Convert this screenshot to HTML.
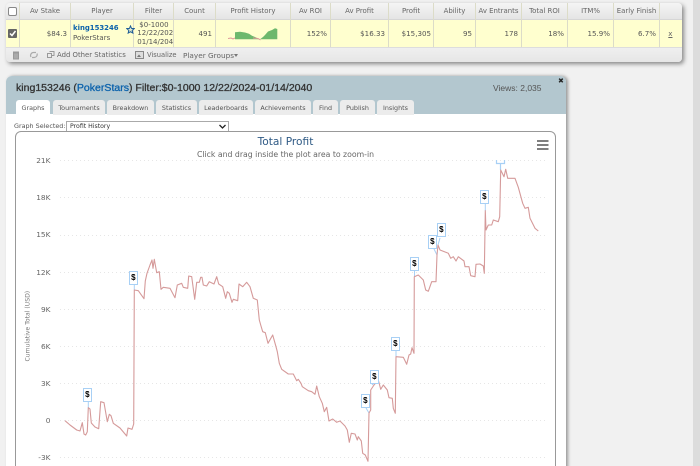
<!DOCTYPE html>
<html><head><meta charset="utf-8"><style>
html,body{margin:0;padding:0;width:700px;height:466px;overflow:hidden;background:#f1f1f1;}
body{position:relative;font-family:"DejaVu Sans",sans-serif;font-size:7px;color:#555;}
#w{position:absolute;left:0;top:0;width:700px;height:466px;overflow:hidden;background:#f1f1f1;filter:blur(.35px);}
.a{position:absolute;white-space:nowrap;}
#scroll{left:693px;top:0;width:7px;height:466px;background:#dcdcdc;}
#grid{left:6px;top:3px;width:676px;height:59px;border-radius:4px;background:#ececec;box-shadow:2px 2px 4px #888;overflow:hidden;}
#h{left:0;top:0;width:676px;height:16px;background:linear-gradient(#f4f4f4,#e4e4e4);border-bottom:1px solid #d6d6d6;}
#r{left:0;top:17px;width:676px;height:27px;background:#ffffcf;border-bottom:1px solid #ddd;}
#t{left:0;top:45px;width:676px;height:14px;background:linear-gradient(#efefef,#e6e6e6);}
.v{top:0;width:1px;height:44px;background:#dcdcc8;}
.hc,.rc{position:absolute;text-align:center;line-height:17px;top:0;color:#666;font-size:6.95px;}
.rc{top:17px;line-height:27px;text-align:right;color:#555;font-size:7.1px;}
#panel{left:6px;top:76px;width:560px;height:400px;background:#fff;border-radius:6px 6px 0 0;box-shadow:2px 0 3px #999;}
#ph{left:0;top:0;width:560px;height:38px;background:#b3c7cf;border-radius:6px 6px 0 0;}
.tab{position:absolute;top:100px;height:15px;line-height:16px;text-align:center;background:#ececec;border-radius:3px 3px 0 0;font-size:6.4px;color:#555;}
#box{left:15px;top:131px;width:539px;height:345px;border:1px solid #999;border-radius:6px;background:#fff;}
.yl{position:absolute;width:37.5px;left:13px;text-align:right;font-size:7.4px;color:#666;line-height:9px;}
.m{position:absolute;width:6.6px;height:11.6px;border:1.2px solid #a8d0f5;background:#fff;color:#000;font:bold 8px/12px "Liberation Sans",sans-serif;text-align:center;}
</style></head><body><div id="w">
<div class="a" id="scroll"></div>
<div class="a" id="grid">
 <div class="a" id="h"></div>
 <div class="a" id="r"></div>
 <div class="a" id="t"></div>
 <div class="a v" style="left:13px"></div><div class="a v" style="left:64px"></div><div class="a v" style="left:127px"></div><div class="a v" style="left:167px"></div><div class="a v" style="left:209px"></div><div class="a v" style="left:284px"></div><div class="a v" style="left:324px"></div><div class="a v" style="left:382px"></div><div class="a v" style="left:427px"></div><div class="a v" style="left:469px"></div><div class="a v" style="left:515px"></div><div class="a v" style="left:561px"></div><div class="a v" style="left:607px"></div><div class="a v" style="left:653px"></div>
 <div class="hc" style="left:14px;width:50px">Av Stake</div>
 <div class="hc" style="left:65px;width:62px">Player</div>
 <div class="hc" style="left:128px;width:39px">Filter</div>
 <div class="hc" style="left:168px;width:41px">Count</div>
 <div class="hc" style="left:210px;width:74px">Profit History</div>
 <div class="hc" style="left:285px;width:39px">Av ROI</div>
 <div class="hc" style="left:325px;width:57px">Av Profit</div>
 <div class="hc" style="left:383px;width:44px">Profit</div>
 <div class="hc" style="left:428px;width:41px">Ability</div>
 <div class="hc" style="left:470px;width:45px">Av Entrants</div>
 <div class="hc" style="left:516px;width:45px">Total ROI</div>
 <div class="hc" style="left:562px;width:45px">ITM%</div>
 <div class="hc" style="left:608px;width:45px">Early Finish</div>
 <div class="a" style="left:2px;top:4px;width:7px;height:7px;background:#fff;border:1px solid #888;border-radius:2px"></div>
 <div class="a" style="left:2px;top:26px;width:9px;height:9px;background:#666;border-radius:1px"></div>
 <svg class="a" style="left:2px;top:26px" width="9" height="9"><path d="M2 4.5L4 6.5L7.5 2" stroke="#fff" stroke-width="1.5" fill="none"/></svg>
 <div class="rc" style="left:14px;width:47px">$84.3</div>
 <div class="a" style="left:67px;top:20.5px;font-weight:bold;color:#0b62ac;font-size:6.9px;line-height:9px">king153246</div>
 <div class="a" style="left:67px;top:31px;color:#555;line-height:9px;font-size:7px">PokerStars</div>
 <svg class="a" style="left:120px;top:22px" width="9" height="9" viewBox="0 0 10 10"><path d="M5 1L6.2 3.8L9.2 4L6.9 6L7.6 9L5 7.4L2.400 9L3.100 6L.8 4L3.800 3.800Z" fill="#dfe9d0" stroke="#1d5c96" stroke-width="1.100"/></svg>
 <div class="a" style="left:131.3px;top:18px;width:35.7px;overflow:hidden;line-height:8.300px;color:#555;font-size:7px"><span style="margin-left:2px">$0-1000</span><br>12/22/2024<br>01/14/2040</div>
 <div class="rc" style="left:168px;width:38px">491</div>
 <svg class="a" style="left:222px;top:24px" width="52" height="14" viewBox="0 0 52 14"><path d="M7 12.300V5.300L12 4.800L17 5.500L21 6.800L24 8.800L27 10L30 11.500L31 12.300Z M32 12.300L35 10L37 8L40 4.500L44 3L47 1.200L49.300 2V12.300Z" fill="#6db86d"/><path d="M0 11.500L3 11L5 12L7 11M25 11L30 11.500L32.500 13" stroke="#d99" stroke-width="1" fill="none"/></svg>
 <div class="rc" style="left:285px;width:36px">152%</div>
 <div class="rc" style="left:325px;width:54px">$16.33</div>
 <div class="rc" style="left:383px;width:42px">$15,305</div>
 <div class="rc" style="left:428px;width:38px">95</div>
 <div class="rc" style="left:470px;width:42px">178</div>
 <div class="rc" style="left:516px;width:42px">18%</div>
 <div class="rc" style="left:562px;width:42px">15.9%</div>
 <div class="rc" style="left:608px;width:42px">6.7%</div>
 <div class="rc" style="left:654px;width:12.500px;text-decoration:underline;color:#666">x</div>
 <svg class="a" style="left:5px;top:47px" width="10" height="10" viewBox="0 0 10 10"><path d="M2 2H8M3 3H7.500V9H2.500V3Z" fill="#aaa" stroke="#999"/></svg>
 <svg class="a" style="left:23px;top:47px" width="10" height="10" viewBox="0 0 10 10"><path d="M2 7A3 3 0 0 1 5 2.500H7M8 3.500A3 3 0 0 1 5 7.500H3" stroke="#aaa" stroke-width="1.200" fill="none"/></svg>
 <svg class="a" style="left:40px;top:47px" width="9" height="9" viewBox="0 0 9 9"><path d="M3.500 1.500H8V5.500H6M1.500 3.500H5.500V7.500H1.500Z" stroke="#999" fill="none"/></svg>
 <div class="a" style="left:51px;top:47px;line-height:11px;color:#666;font-size:6.900px">Add Other Statistics</div>
 <svg class="a" style="left:129px;top:48px" width="9" height="8"><rect x=".5" y=".5" width="8" height="7" fill="#ddd" stroke="#888"/><path d="M2 6L4 3.500L6 6Z" fill="#777"/></svg>
 <div class="a" style="left:141px;top:47px;line-height:11px;color:#666;font-size:6.700px">Visualize</div>
 <div class="a" style="left:177px;top:46.500px;line-height:11px;color:#666;font-size:7.300px">Player Groups</div>
 <div class="a" style="left:228px;top:51px;border:2.500px solid transparent;border-top:3px solid #777"></div>
</div>

<div class="a" id="panel"><div class="a" id="ph"></div></div>
<div class="a" style="left:16px;top:80px;font:10.540px/16px 'Liberation Sans',sans-serif;color:#333;-webkit-text-stroke:.3px #333">king153246 (<span style="color:#0b62ac;-webkit-text-stroke:.3px #0b62ac">PokerStars</span>) Filter:$0-1000 12/22/2024-01/14/2040</div>
<div class="a" style="left:493px;top:81.500px;font:8.500px/13px 'Liberation Sans',sans-serif;color:#555">Views: 2,035</div>
<div class="a" style="left:558px;top:77px;font:bold 7px/8px 'DejaVu Sans',sans-serif;color:#222">✖</div>
<div class="tab" style="left:16px;width:34px;background:#fff;color:#555">Graphs</div>
<div class="tab" style="left:53px;width:52px">Tournaments</div>
<div class="tab" style="left:107px;width:47px">Breakdown</div>
<div class="tab" style="left:156px;width:41px">Statistics</div>
<div class="tab" style="left:199px;width:54px">Leaderboards</div>
<div class="tab" style="left:255px;width:56px">Achievements</div>
<div class="tab" style="left:313px;width:25px">Find</div>
<div class="tab" style="left:340px;width:35px">Publish</div>
<div class="tab" style="left:377px;width:37px">Insights</div>
<div class="a" style="left:14px;top:122px;line-height:9px;color:#555;font-size:6.400px">Graph Selected:</div>
<div class="a" style="left:66px;top:121px;width:161px;height:9px;border:1px solid #aaa;border-bottom:0;background:#fff;color:#333;font-size:6.200px;line-height:10px;text-indent:3px">Profit History</div>
<svg class="a" style="left:219px;top:124px" width="7" height="5"><path d="M.5 1L3.500 4L6.500 1" stroke="#222" stroke-width="1.300" fill="none"/></svg>
<div class="a" id="box"></div>
<div class="a" style="left:15px;width:541px;top:135px;text-align:center;font-size:10.600px;line-height:14px;color:#2f5a85">Total Profit</div>
<div class="a" style="left:15px;width:541px;top:149px;text-align:center;font-size:7.760px;line-height:11px;color:#666">Click and drag inside the plot area to zoom-in</div>
<svg class="a" style="left:537px;top:140px" width="12" height="10"><path d="M0 1H11.500M0 5H11.500M0 9H11.500" stroke="#555" stroke-width="1.600"/></svg>

<div class="yl" style="top:156px">21K</div><div class="yl" style="top:193px">18K</div><div class="yl" style="top:230px">15K</div><div class="yl" style="top:268px">12K</div><div class="yl" style="top:305px">9K</div><div class="yl" style="top:342px">6K</div><div class="yl" style="top:379px">3K</div><div class="yl" style="top:416px">0</div><div class="yl" style="top:453px">-3K</div>
<div class="a" style="left:-7.500px;top:322px;width:70px;text-align:center;transform:rotate(-90deg);font-size:6.100px;line-height:9px;color:#777">Cumulative Total (USD)</div>

<svg class="a" style="left:0;top:0" width="700" height="466">
 <path d="M60 160.500H545M60 197.500H545M60 235.500H545M60 272.500H545M60 309.500H545M60 346.500H545M60 383.500H545M60 420.500H545M60 457.500H545" stroke="#e6e6e6" stroke-width="1" stroke-dasharray="1 3" fill="none"/>
 <path d="M88.300 407.700V401M134.300 290V284M369 413L366 408M372 385L374 383M396 356.700V350M414.500 277V270M437 255L434 249M438 245L440 238M485.300 211V204" stroke="#a8d0f5" stroke-width="1" fill="none"/>
 <path d="M496.500 160V163.500H504.500V160M500.500 163.500V170" stroke="#a8d0f5" stroke-width="1.200" fill="none"/>
 <path d="M65 420.700L70 425L76.700 430L80 431L82.300 422.700L84 434L85.700 435L87.300 431.700L88.300 407.700L90 409L91.300 423L95 427L98.700 428.700L100.700 401.700L104 402.700L107.300 421.700L109.300 414.300L111 415.700L113.300 423.300L120 428L126.700 436L128 428L132 429.300L133.700 424L134.300 290L138.300 290.700L144 298.700L145.300 281L147 273.300L150 265L152 260L153 268.300L154.300 259.300L156.700 272.700L159.300 271.700L161 289.300L163.300 287.300L170 288.300L175 297.700L177.300 285L181.700 283.300L183.300 287.300L187.700 288.300L188.700 276L191.700 276.700L194.700 299.300L196.700 282.300L199.300 282.300L200.700 277.300L202 277.300L203.300 285L206.700 286L209.300 281.700L214 284L216.700 276.700L218.700 284L222.700 286.700L225.700 298.300L227.300 291.700L229.300 293.300L232 302.300L233.300 299.300L237.700 300.700L239 284L242.700 286.700L246.700 282.300L250 286.700L253.300 298.300L257.300 300L259.300 320L261 326L262.700 331.700L265.300 332.700L268 343.300L272.700 335L276 346.700L277.300 351.700L279.300 363.300L281.700 369.300L288.300 374L293.300 374L296.700 380.700L298.300 379.300L301 383.300L302.300 386.700L308.300 390.700L311.700 391.700L315 394.300L316.700 386L319.300 396.700L322.300 403.300L324.300 411.700L326.700 407.300L329 421L332.700 419L336.700 422.300L340 421L345 426L347.300 430L349.300 442.300L351.300 433.300L355 434L357.300 440L358.300 436.700L361.300 441L362.700 453.300L365.300 455L368 461.300L369 413L370.700 410L370.700 390L374 385L378.300 380L380.700 389.300L383.300 385L387.300 390L389 397.700L392.300 398.300L393.300 408.300L395.300 413.300L396 356.700L403.300 357.300L406.700 364.300L409 355L410.700 354L412 347.700L414 353.300L414.300 276.700L418.300 275L423.300 280L425.700 290L428.300 291.300L431.700 281.700L436 281.700L437 255L438 245L440 250L448.300 253.300L450.700 258.300L453.300 256.700L456 261L458.300 256.700L464 261L465 266.700L469 266.700L470.700 275.700L475 276.700L476 264.300L480 264L483.300 266L484.300 273.300L485.300 210.700L486 230L488.300 225L491.700 225L493.300 220L498.300 221.700L499.700 216.700L500.700 170L504 176.700L505.700 169.300L507.700 178.300L515 178.300L518.300 187.300L522.700 203.300L525 208.300L528.300 207.300L530 218.300L535 228.300L538.300 231" stroke="#d59a9a" stroke-width="1.100" fill="none" stroke-linejoin="round"/>
</svg>
<div class="m" style="left:83px;top:388px">$</div>
<div class="m" style="left:129px;top:271px">$</div>
<div class="m" style="left:361px;top:394px">$</div>
<div class="m" style="left:370px;top:370px">$</div>
<div class="m" style="left:391px;top:337px">$</div>
<div class="m" style="left:410px;top:257px">$</div>
<div class="m" style="left:428px;top:235px">$</div>
<div class="m" style="left:437px;top:223px">$</div>
<div class="m" style="left:480px;top:190px">$</div>
</div></body></html>
